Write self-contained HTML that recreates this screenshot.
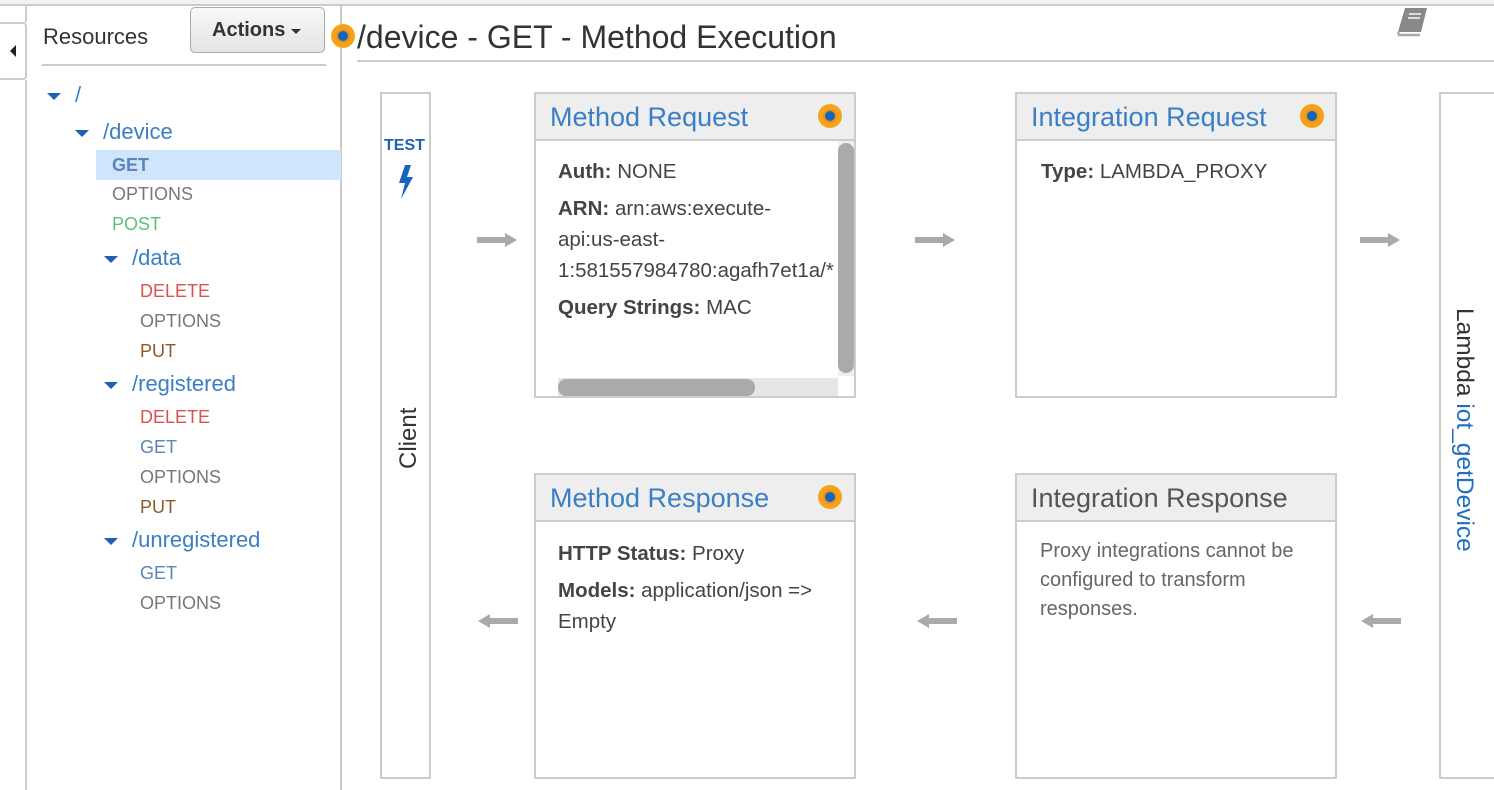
<!DOCTYPE html>
<html><head><meta charset="utf-8"><style>
*{margin:0;padding:0;box-sizing:border-box}
body{width:1494px;height:790px;background:#fff;position:relative;overflow:hidden;font-family:"Liberation Sans",Arial,sans-serif;color:#444}
.a{position:absolute}
.t{position:absolute;white-space:nowrap}
.box{position:absolute;border:2px solid #ccc;background:#fff}
.hd{position:absolute;left:0;right:0;top:0;height:47px;background:#eee;border-bottom:2px solid #ccc;font-size:27px;color:#3a7fc6;padding:8px 0 0 14px}
.dot{position:absolute;width:24px;height:24px;border-radius:50%;background:#f7a21b;}
.dot:after{content:"";position:absolute;left:7px;top:7px;width:10px;height:10px;border-radius:50%;background:#1565c0;box-shadow:0 0 0 2px #e89418}
.bd{position:absolute;font-size:20.5px;line-height:31px;color:#444}
.bd b{color:#444}
.tri{display:inline-block;width:0;height:0;border-left:7px solid transparent;border-right:7px solid transparent;border-top:7px solid #1f5fb5;margin-right:14px;vertical-align:middle}
.m{font-size:18px}
.r{font-size:22px;color:#3a7fc6}
.arr{position:absolute;width:40px;height:14px}
</style></head><body>
<div class="a" style="left:0;top:0;width:1494px;height:6px;background:#f2f2f2;border-bottom:2px solid #ccc"></div>
<div class="a" style="left:0;top:22px;width:27px;height:58px;border:2px solid #ccc;border-left:none;border-radius:0 4px 4px 0;background:#fff"></div>
<div class="a" style="left:10px;top:45px;width:0;height:0;border-top:6px solid transparent;border-bottom:6px solid transparent;border-right:6px solid #222"></div>
<div class="a" style="left:25px;top:80px;width:2px;height:710px;background:#ccc"></div>
<div class="a" style="left:25px;top:6px;width:2px;height:16px;background:#ccc"></div>
<div class="a" style="left:340px;top:6px;width:2px;height:784px;background:#ccc"></div>
<div class="t" style="left:43px;top:24px;font-size:22px;color:#333">Resources</div>
<div class="a" style="left:190px;top:7px;width:135px;height:46px;border:1px solid #aaa;border-radius:5px;background:linear-gradient(#f8f8f8,#e4e4e4)"></div>
<div class="t" style="left:212px;top:19px;font-size:20px;font-weight:bold;color:#333">Actions</div>
<div class="a" style="left:291px;top:29px;border-left:5px solid transparent;border-right:5px solid transparent;border-top:5px solid #333"></div>
<div class="a" style="left:42px;top:64px;width:284px;height:2px;background:#ccc"></div>
<div class="a" style="left:96px;top:150px;width:245px;height:30px;background:#cfe5fc"></div>
<div class="t r" style="left:47px;top:82px"><span class="tri"></span>/</div>
<div class="t r" style="left:75px;top:119px"><span class="tri"></span>/device</div>
<div class="t m" style="left:112px;top:155px;font-weight:bold;color:#5b84b8">GET</div>
<div class="t m" style="left:112px;top:184px;color:#777">OPTIONS</div>
<div class="t m" style="left:112px;top:214px;color:#5cc07a">POST</div>
<div class="t r" style="left:104px;top:245px"><span class="tri"></span>/data</div>
<div class="t m" style="left:140px;top:281px;color:#d9534f">DELETE</div>
<div class="t m" style="left:140px;top:311px;color:#777">OPTIONS</div>
<div class="t m" style="left:140px;top:341px;color:#8b5a2b">PUT</div>
<div class="t r" style="left:104px;top:371px"><span class="tri"></span>/registered</div>
<div class="t m" style="left:140px;top:407px;color:#d9534f">DELETE</div>
<div class="t m" style="left:140px;top:437px;color:#5b84b8">GET</div>
<div class="t m" style="left:140px;top:467px;color:#777">OPTIONS</div>
<div class="t m" style="left:140px;top:497px;color:#8b5a2b">PUT</div>
<div class="t r" style="left:104px;top:527px"><span class="tri"></span>/unregistered</div>
<div class="t m" style="left:140px;top:563px;color:#5b84b8">GET</div>
<div class="t m" style="left:140px;top:593px;color:#777">OPTIONS</div>

<div class="dot" style="left:331px;top:24px"></div>
<div class="t" style="left:357px;top:19px;font-size:32px;color:#333">/device - GET - Method Execution</div>
<div class="a" style="left:357px;top:60px;width:1137px;height:2px;background:#ccc"></div>
<svg class="a" style="left:1396px;top:7px" width="34" height="30" viewBox="0 0 34 30"><path d="M9 1h22l-6 24H2z" fill="#888"/><path d="M2 25l1 3h21" stroke="#aaa" stroke-width="2.5" fill="none"/><rect x="13" y="6" width="12" height="2" fill="#ddd"/><rect x="12" y="10" width="12" height="2" fill="#ddd"/></svg>

<div class="box" style="left:380px;top:92px;width:51px;height:687px"></div>
<div class="t" style="left:384px;top:137px;font-size:16px;font-weight:bold;color:#1f5fb5">TEST</div>
<svg class="a" style="left:396px;top:164px" width="20" height="36" viewBox="0 0 20 36"><path d="M9 1L3 19h6L5 35 17 13h-6l4-12z" fill="#1565c0"/></svg>
<div class="t" style="font-size:24px;color:#333;transform:rotate(-90deg);transform-origin:left top;top:469px;left:395px">Client</div>

<div class="box" style="left:534px;top:92px;width:322px;height:306px">
<div class="hd">Method Request</div><div class="dot" style="left:282px;top:10px"></div>
<div class="bd" style="left:22px;top:62px;width:280px;overflow:hidden;white-space:nowrap"><b>Auth:</b> NONE<div style="height:6px"></div><b>ARN:</b> arn:aws:execute-<br>api:us-east-<br>1:581557984780:agafh7et1a/*<div style="height:6px"></div><b>Query Strings:</b> MAC</div>
<div class="a" style="left:302px;top:47px;width:16px;height:235px;background:#eee"></div>
<div class="a" style="left:302px;top:49px;width:16px;height:230px;border-radius:8px;background:#aaa"></div>
<div class="a" style="left:22px;top:284px;width:280px;height:18px;background:#e6e6e6"></div>
<div class="a" style="left:22px;top:285px;width:197px;height:17px;border-radius:8px;background:#aaa"></div>
</div>
<div class="box" style="left:1015px;top:92px;width:322px;height:306px">
<div class="hd">Integration Request</div><div class="dot" style="left:283px;top:10px"></div>
<div class="bd" style="left:24px;top:62px"><b>Type:</b> LAMBDA_PROXY</div>
</div>
<div class="box" style="left:534px;top:473px;width:322px;height:306px">
<div class="hd">Method Response</div><div class="dot" style="left:282px;top:10px"></div>
<div class="bd" style="left:22px;top:63px"><b>HTTP Status:</b> Proxy<div style="height:6px"></div><b>Models:</b> application/json =&gt;<br>Empty</div>
</div>
<div class="box" style="left:1015px;top:473px;width:322px;height:306px">
<div class="hd" style="color:#555">Integration Response</div>
<div class="bd" style="left:23px;top:62px;font-size:20px;line-height:29px;color:#666">Proxy integrations cannot be<br>configured to transform<br>responses.</div>
</div>
<div class="box" style="left:1439px;top:92px;width:60px;height:687px"></div>
<div class="t" style="font-size:24.5px;color:#333;transform:rotate(90deg);transform-origin:left top;left:1478px;top:308px">Lambda <span style="color:#1f6fc5">iot_getDevice</span></div>

<svg class="arr" style="left:477px;top:233px" viewBox="0 0 40 14"><path d="M0 4h28V0l12 7-12 7v-4H0z" fill="#aaa"/></svg>
<svg class="arr" style="left:915px;top:233px" viewBox="0 0 40 14"><path d="M0 4h28V0l12 7-12 7v-4H0z" fill="#aaa"/></svg>
<svg class="arr" style="left:1360px;top:233px" viewBox="0 0 40 14"><path d="M0 4h28V0l12 7-12 7v-4H0z" fill="#aaa"/></svg>
<svg class="arr" style="left:478px;top:614px" viewBox="0 0 40 14"><path d="M40 4H12V0L0 7l12 7v-4h28z" fill="#aaa"/></svg>
<svg class="arr" style="left:917px;top:614px" viewBox="0 0 40 14"><path d="M40 4H12V0L0 7l12 7v-4h28z" fill="#aaa"/></svg>
<svg class="arr" style="left:1361px;top:614px" viewBox="0 0 40 14"><path d="M40 4H12V0L0 7l12 7v-4h28z" fill="#aaa"/></svg>
</body></html>
